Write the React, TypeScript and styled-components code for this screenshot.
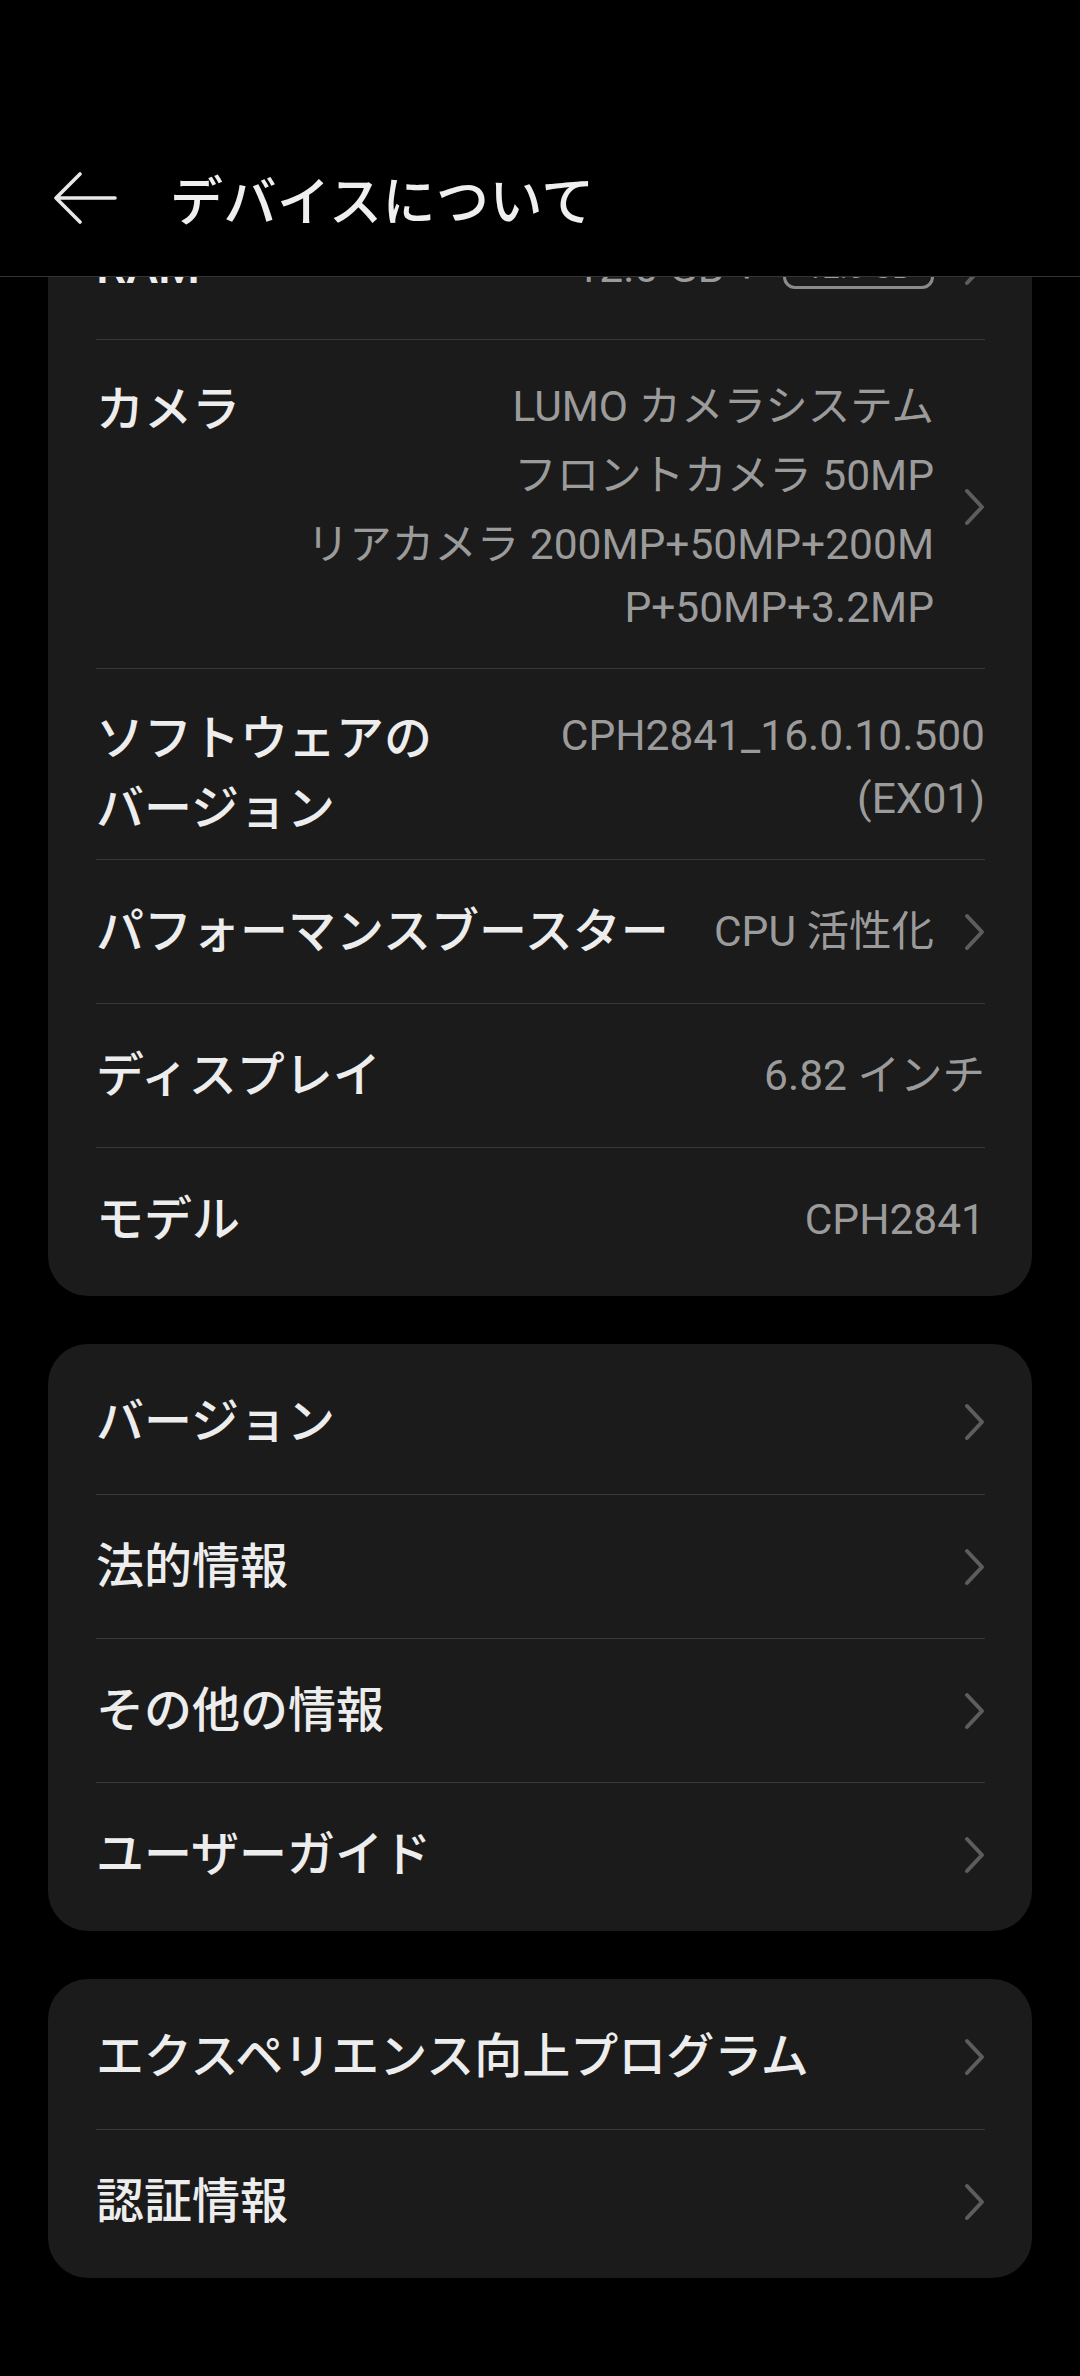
import React, { useLayoutEffect, useRef } from 'react';
import styled, { createGlobalStyle } from 'styled-components';

const GlobalStyle = createGlobalStyle`
  html, body {
    margin: 0;
    padding: 0;
    background: #000;
  }
  body {
    font-family: 'Roboto', 'Noto Sans CJK JP', sans-serif;
    -webkit-font-smoothing: antialiased;
  }
`;

const Screen = styled.div`
  width: 1080px;
  height: 2376px;
  display: flex;
  flex-direction: column;
  background: #000;
  overflow: hidden;
`;

const Header = styled.header`
  flex-shrink: 0;
  height: 277px;
  box-sizing: border-box;
  padding-top: 120px;
  border-bottom: 1px solid #343434;
  display: flex;
  align-items: center;
  gap: 50px;
  padding-left: 50px;
  background: #000;
`;

const BackButton = styled.button`
  background: none;
  border: 0;
  padding: 0;
  width: 70px;
  height: 56px;
  display: flex;
  align-items: center;
  justify-content: center;
  cursor: pointer;
`;

const Title = styled.h1`
  margin: 0;
  font-family: 'Noto Sans CJK JP', sans-serif;
  font-size: 53px;
  font-weight: 500;
  color: #efefef;
  letter-spacing: 0.5px;
`;

const ScrollArea = styled.main`
  flex: 1;
  overflow-y: auto;
  scrollbar-width: none;
  &::-webkit-scrollbar {
    display: none;
  }
`;

const List = styled.div`
  display: flex;
  flex-direction: column;
  gap: 48px;
  padding: 0 48px 120px;
`;

const Card = styled.section`
  background: #1b1b1b;
  border-radius: 40px;
  padding: 6px 47px 5px 48px;
`;

const Row = styled.div<{ $top?: boolean; $pb?: number }>`
  display: flex;
  align-items: ${(p) => (p.$top ? 'flex-start' : 'center')};
  min-height: 144px;
  box-sizing: border-box;
  padding: ${(p) => (p.$top ? `35px 0 ${p.$pb ?? 30}px` : '0')};
  & + & {
    border-top: 1.5px solid #383838;
  }
`;

const Label = styled.div<{ $max?: number }>`
  flex-shrink: ${(p) => (p.$max ? 1 : 0)};
  max-width: ${(p) => (p.$max ? `${p.$max}px` : 'none')};
  font-family: 'Roboto', 'Noto Sans CJK JP', sans-serif;
  font-size: 48px;
  font-weight: 500;
  line-height: 70px;
  color: #ededed;
`;

const Value = styled.div<{ $width?: number }>`
  margin-left: auto;
  padding-left: 32px;
  width: ${(p) => (p.$width ? `${p.$width}px` : 'auto')};
  flex-shrink: ${(p) => (p.$width ? 0 : 1)};
  text-align: right;
  font-size: 42.5px;
  line-height: 63px;
  color: #9b9b9b;
  display: flex;
  flex-direction: column;
  align-items: flex-end;
  gap: 6px;
`;

const ValueLine = styled.div<{ $breakAll?: boolean }>`
  word-break: ${(p) => (p.$breakAll ? 'break-all' : 'normal')};
`;

const InlineValue = styled.div`
  display: flex;
  align-items: center;
  white-space: pre;
`;

const Badge = styled.span`
  display: inline-flex;
  align-items: center;
  height: 44px;
  box-sizing: border-box;
  padding: 0 20px;
  margin-left: 24px;
  border: 3px solid #8b8b8b;
  border-radius: 12px;
  font-size: 30px;
  color: #9b9b9b;
`;

const Chevron = styled.svg`
  flex-shrink: 0;
  align-self: center;
  margin-left: 29px;
`;

const ChevronIcon = () => (
  <Chevron width="22" height="40" viewBox="0 0 22 40">
    <path
      d="M4 4 L19 20 L4 36"
      fill="none"
      stroke="#5d5d5d"
      strokeWidth="4"
      strokeLinecap="round"
      strokeLinejoin="round"
    />
  </Chevron>
);

const BackIcon = () => (
  <svg width="64" height="52" viewBox="0 0 64 52">
    <path
      d="M62 26 H3 M27 2 L3 26 L27 50"
      fill="none"
      stroke="#e8e8e8"
      strokeWidth="3.6"
      strokeLinecap="round"
      strokeLinejoin="round"
    />
  </svg>
);

const LinkRow = ({ label }: { label: string }) => (
  <Row>
    <Label>{label}</Label>
    <Value />
    <ChevronIcon />
  </Row>
);

const App = () => {
  const scrollRef = useRef<HTMLElement>(null);

  // the list is shown scrolled a bit, the first rows sit under the header
  useLayoutEffect(() => {
    if (scrollRef.current) scrollRef.current.scrollTop = 88;
  }, []);

  return (
    <Screen>
      <GlobalStyle />
      <Header>
        <BackButton aria-label="戻る">
          <BackIcon />
        </BackButton>
        <Title>デバイスについて</Title>
      </Header>
      <ScrollArea ref={scrollRef}>
        <List>
          <Card>
            <Row>
              <Label>RAM</Label>
              <Value>
                <InlineValue>
                  12.0 GB +<Badge>12.0 GB</Badge>
                </InlineValue>
              </Value>
              <ChevronIcon />
            </Row>
            <Row $top $pb={29}>
              <Label>カメラ</Label>
              <Value $width={640}>
                <ValueLine>LUMO カメラシステム</ValueLine>
                <ValueLine>フロントカメラ 50MP</ValueLine>
                <ValueLine $breakAll>
                  リアカメラ 200MP+50MP+200MP+50MP+3.2MP
                </ValueLine>
              </Value>
              <ChevronIcon />
            </Row>
            <Row $top $pb={15}>
              <Label $max={345}>ソフトウェアのバージョン</Label>
              <Value>
                <ValueLine>CPH2841_16.0.10.500 (EX01)</ValueLine>
              </Value>
            </Row>
            <Row>
              <Label>パフォーマンスブースター</Label>
              <Value>CPU 活性化</Value>
              <ChevronIcon />
            </Row>
            <Row>
              <Label>ディスプレイ</Label>
              <Value>6.82 インチ</Value>
            </Row>
            <Row>
              <Label>モデル</Label>
              <Value>CPH2841</Value>
            </Row>
          </Card>

          <Card>
            <LinkRow label="バージョン" />
            <LinkRow label="法的情報" />
            <LinkRow label="その他の情報" />
            <LinkRow label="ユーザーガイド" />
          </Card>

          <Card>
            <LinkRow label="エクスペリエンス向上プログラム" />
            <LinkRow label="認証情報" />
          </Card>
        </List>
      </ScrollArea>
    </Screen>
  );
};

export default App;
